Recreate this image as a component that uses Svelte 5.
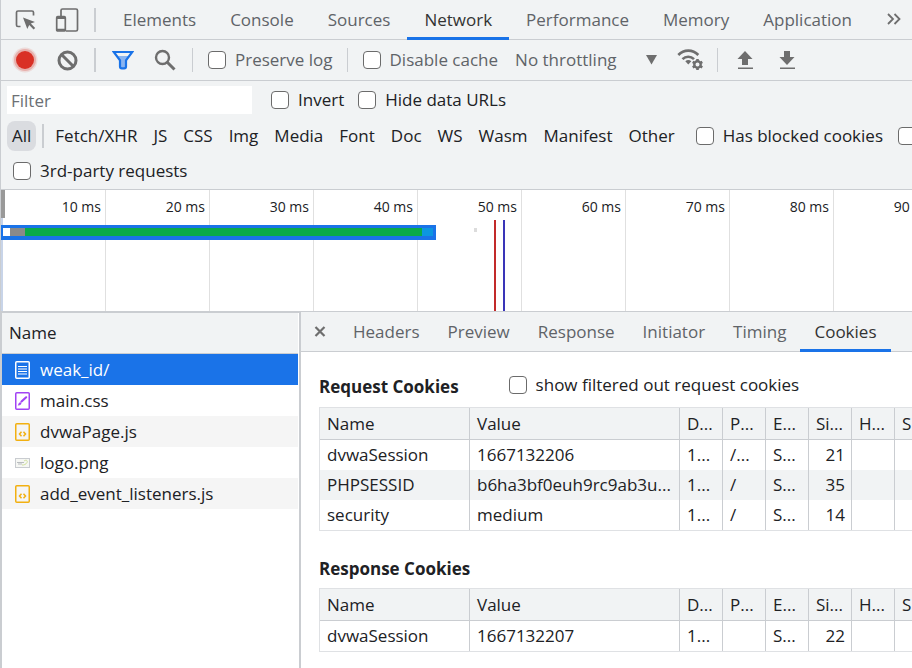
<script lang="ts">
	const panels = ['Elements', 'Console', 'Sources', 'Network', 'Performance', 'Memory', 'Application'];
	const types = ['Fetch/XHR', 'JS', 'CSS', 'Img', 'Media', 'Font', 'Doc', 'WS', 'Wasm', 'Manifest', 'Other'];
	const ticks = [10, 20, 30, 40, 50, 60, 70, 80, 90];
	const detailTabs = ['Headers', 'Preview', 'Response', 'Initiator', 'Timing', 'Cookies'];
	const columns = ['Name', 'Value', 'D...', 'P...', 'E...', 'Si...', 'H...', 'S...'];

	const requests = [
		{ name: 'weak_id/', kind: 'doc' },
		{ name: 'main.css', kind: 'css' },
		{ name: 'dvwaPage.js', kind: 'js' },
		{ name: 'logo.png', kind: 'img' },
		{ name: 'add_event_listeners.js', kind: 'js' }
	];

	const requestCookies = [
		['dvwaSession', '1667132206', '1...', '/...', 'S...', '21', '', ''],
		['PHPSESSID', 'b6ha3bf0euh9rc9ab3u...', '1...', '/', 'S...', '35', '', ''],
		['security', 'medium', '1...', '/', 'S...', '14', '', '']
	];
	const responseCookies = [['dvwaSession', '1667132207', '1...', '', 'S...', '22', '', '']];

	let activePanel = $state('Network');
	let activeType = $state('All');
	let activeTab = $state('Cookies');
	let selected = $state('weak_id/');
</script>

{#snippet fileIcon(kind: string)}
	{#if kind === 'img'}
		<svg class="file-icon" width="15" height="18" viewBox="0 0 15 18">
			<rect x="0.5" y="4.500" width="14" height="9" fill="#f6f7f4" stroke="#c9ccd0" />
			<path d="M2 8.500h7M3 10h4" stroke="#b9bcbf" />
			<path d="M9 7c2-1.500 4-.5 3 1.500s-3 2.500-5 2.500" fill="none" stroke="#cfe09a" />
		</svg>
	{:else}
		<svg class="file-icon {kind}" width="15" height="18" viewBox="0 0 15 18" fill="none" stroke="currentColor">
			<rect x="0.750" y="0.750" width="13.500" height="16.500" rx="1" stroke-width="1.500" />
			{#if kind === 'doc'}
				<path d="M3 5.500h9M3 8h9M3 10.500h9M3 13h9" stroke-width="1.200" />
			{:else if kind === 'css'}
				<path d="M6.500 9.500l4.700-4.200" stroke-width="2.200" stroke-linecap="round" />
				<path d="M3 13.200c.8-.3.600-2.700 2.200-2.700 1.600.2 1.300 2.700-2.200 2.700z" fill="currentColor" stroke-width="0.500" />
			{:else}
				<path d="M6.500 8.800l-2 2.200 2 2.200M8.500 8.800l2 2.200-2 2.200" stroke-width="1.500" />
			{/if}
		</svg>
	{/if}
{/snippet}

{#snippet cookieTable(label: string, rows: string[][])}
	<div class="table-wrap">
		<table aria-label={label}>
			<colgroup>
				<col class="col-name" />
				<col />
				<col class="col-small" />
				<col class="col-small" />
				<col class="col-small" />
				<col class="col-small" />
				<col class="col-small" />
				<col class="col-small" />
			</colgroup>
			<thead>
				<tr>
					{#each columns as column}
						<th>{column}</th>
					{/each}
				</tr>
			</thead>
			<tbody>
				{#each rows as row}
					<tr>
						{#each row as cell, i}
							<td class:number={i === 5}>{cell}</td>
						{/each}
					</tr>
				{/each}
			</tbody>
		</table>
	</div>
{/snippet}

<div class="devtools">
	<nav class="panel-bar">
		<button class="icon-button" aria-label="Inspect element">
			<svg width="22" height="24" viewBox="0 0 22 24">
				<path d="M6.500 18.500H4a1.500 1.500 0 0 1-1.500-1.500V4.500A1.500 1.500 0 0 1 4 3h14a1.500 1.500 0 0 1 1.500 1.500v3" fill="none" stroke="#6e6e6e" stroke-width="1.700" />
				<path d="M9 9.500l12 4.500-4.200 1.600 4.400 4.300-1.600 1.600-4.400-4.400L13.300 21z" fill="#6e6e6e" />
			</svg>
		</button>
		<button class="icon-button" aria-label="Toggle device toolbar">
			<svg width="24" height="26" viewBox="0 0 24 26" fill="none" stroke="#6e6e6e">
				<path d="M6 9V3.500A1.500 1.500 0 0 1 7.500 2H21a1.500 1.500 0 0 1 1.500 1.500v19A1.500 1.500 0 0 1 21 24H11" stroke-width="1.700" />
				<rect x="1.700" y="9.700" width="8.600" height="14.300" rx="1" stroke-width="1.700" />
				<path d="M1.500 11h9M1.500 22.800h9" stroke-width="2" />
			</svg>
		</button>
		<span class="divider"></span>
		<div class="panel-tabs">
			{#each panels as panel}
				<button class="tab" class:active={activePanel === panel} onclick={() => (activePanel = panel)}>{panel}</button>
			{/each}
		</div>
		<button class="more" aria-label="More tabs">
			<svg width="14" height="14" viewBox="0 0 14 14" fill="none" stroke="#6e6e6e" stroke-width="1.800">
				<path d="M1 1l5 5-5 5M7.500 1l5 5-5 5" />
			</svg>
		</button>
	</nav>

	<div class="toolbar">
		<button class="icon-button" aria-label="Stop recording">
			<svg width="26" height="26" viewBox="0 0 26 26">
				<circle cx="13" cy="13" r="12.500" fill="#d93025" opacity="0.120" />
				<circle cx="13" cy="13" r="11" fill="#d93025" opacity="0.250" />
				<circle cx="13" cy="13" r="9" fill="#d93025" />
			</svg>
		</button>
		<button class="icon-button" aria-label="Clear">
			<svg width="22" height="22" viewBox="0 0 22 22" fill="none" stroke="#6e6e6e" stroke-width="3">
				<circle cx="11.500" cy="11.500" r="8.500" />
				<path d="M5.500 5.500l12 12" />
			</svg>
		</button>
		<span class="divider"></span>
		<button class="icon-button" aria-label="Filter">
			<svg width="22" height="20" viewBox="0 0 22 20">
				<path d="M4.500 6h13l-4 5v7H8.500v-7z" fill="#8ab4f0" />
				<path d="M1.800 2h18.400L14 10.300v6.200a1.800 1.800 0 0 1-1.800 1.800H9.800A1.800 1.800 0 0 1 8 16.500v-6.200z" fill="none" stroke="#1a73e8" stroke-width="2.200" />
			</svg>
		</button>
		<button class="icon-button" aria-label="Search">
			<svg width="22" height="22" viewBox="0 0 22 22" fill="none" stroke="#6e6e6e">
				<circle cx="8.500" cy="8.500" r="6.500" stroke-width="2.400" />
				<path d="M13 13l7.500 7.500" stroke-width="3" />
			</svg>
		</button>
		<span class="divider thin"></span>
		<label class="check"><input type="checkbox" />Preserve log</label>
		<span class="divider thin wide"></span>
		<label class="check"><input type="checkbox" />Disable cache</label>
		<label class="throttling">
			<select aria-label="Throttling">
				<option>No throttling</option>
			</select>
			<svg width="11" height="10" viewBox="0 0 11 10"><path d="M0 0h11L5.500 9.500z" fill="#6e6e6e" /></svg>
		</label>
		<button class="icon-button" aria-label="Network conditions">
			<svg width="26" height="24" viewBox="0 0 26 24" fill="none" stroke="#6e6e6e">
				<path d="M1.300 7c5.500-5.800 14.500-5.800 20 0" stroke-width="2.600" />
				<path d="M5.500 11.200c3.200-3.300 8.300-3.300 11.500 0" stroke-width="2.600" />
				<path d="M8.300 13.300c1.800-1.800 4.200-1.800 6 0l-3 3.200z" fill="#6e6e6e" stroke="none" />
				<circle cx="20.500" cy="16.500" r="3.200" stroke-width="2.400" />
				<path d="M20.500 11v2M20.500 20v2M15.700 13.800l1.800 1M23.500 18.300l1.800 1M15.700 19.300l1.800-1M23.500 14.800l1.800-1" stroke-width="2.600" />
			</svg>
		</button>
		<span class="divider thin"></span>
		<button class="icon-button" aria-label="Import HAR file">
			<svg width="16" height="20" viewBox="0 0 16 20" fill="#6e6e6e"><path d="M8 1l7.500 8H11v6H5V9H.5zM1 17.500h15V19H1z" /></svg>
		</button>
		<button class="icon-button" aria-label="Export HAR file">
			<svg width="16" height="20" viewBox="0 0 16 20" fill="#6e6e6e"><path d="M8 15l7.500-8H11V1H5v6H.5zM1 17.500h15V19H1z" /></svg>
		</button>
	</div>

	<div class="filters">
		<div class="filter-row">
			<input class="filter-input" type="text" placeholder="Filter" aria-label="Filter" />
			<label class="check"><input type="checkbox" />Invert</label>
			<label class="check"><input type="checkbox" />Hide data URLs</label>
		</div>
		<div class="filter-row types">
			<button class="type all" class:active={activeType === 'All'} onclick={() => (activeType = 'All')}>All</button>
			<span class="divider"></span>
			<div class="type-list">
				{#each types as type}
					<button class="type" class:active={activeType === type} onclick={() => (activeType = type)}>{type}</button>
				{/each}
			</div>
			<label class="check"><input type="checkbox" />Has blocked cookies</label>
			<input type="checkbox" aria-label="Blocked requests" />
		</div>
		<div class="filter-row third">
			<label class="check"><input type="checkbox" />3rd-party requests</label>
		</div>
	</div>

	<div class="overview">
		<div class="ticks">
			{#each ticks as tick}
				<span class="tick">{tick} ms</span>
			{/each}
		</div>
		<span class="handle"></span>
		<span class="edge"></span>
		<div class="request-bar">
			<span class="stalled"></span>
			<span class="waiting"></span>
			<span class="download"></span>
		</div>
		<span class="blip"></span>
		<span class="marker load"></span>
		<span class="marker dom"></span>
	</div>

	<main>
		<section class="requests">
			<div class="requests-head">Name</div>
			{#each requests as request}
				<button class="request" class:selected={selected === request.name} onclick={() => (selected = request.name)}>
					{@render fileIcon(request.kind)}
					{request.name}
				</button>
			{/each}
		</section>

		<section class="details">
			<nav class="detail-bar">
				<button class="close" aria-label="Close">
					<svg width="12" height="12" viewBox="0 0 12 12"><path d="M1.500 1l9 9M10.500 1l-9 9" stroke="#6e6e6e" stroke-width="2.200" /></svg>
				</button>
				{#each detailTabs as tab}
					<button class="tab" class:active={activeTab === tab} onclick={() => (activeTab = tab)}>{tab}</button>
				{/each}
			</nav>
			<div class="cookies">
				<div class="cookies-head">
					<h2>Request Cookies</h2>
					<label class="check"><input type="checkbox" />show filtered out request cookies</label>
				</div>
				{@render cookieTable('Request Cookies', requestCookies)}
				<div class="cookies-head second">
					<h2>Response Cookies</h2>
				</div>
				{@render cookieTable('Response Cookies', responseCookies)}
			</div>
		</section>
	</main>
</div>

<style>
	:global(body) {
		margin: 0;
		background: #fff;
	}
	.devtools {
		display: flex;
		flex-direction: column;
		min-height: 100vh;
		box-sizing: border-box;
		border-left: 1px solid #cacdd1;
		overflow: hidden;
		font-family: 'Open Sans', 'Noto Sans', sans-serif;
		font-size: 17px;
		line-height: 24px;
		color: #202124;
	}
	button,
	select,
	input {
		font: inherit;
		color: inherit;
		margin: 0;
	}
	button {
		padding: 0;
		border: none;
		background: none;
		white-space: nowrap;
	}
	svg {
		display: block;
		flex: none;
	}
	input[type='checkbox'] {
		appearance: none;
		flex: none;
		width: 18px;
		height: 18px;
		box-sizing: border-box;
		border: 1px solid #6b6b6b;
		border-radius: 4px;
		background: #fff;
	}
	input[type='checkbox']:checked {
		background: #1a73e8;
	}
	.check {
		display: flex;
		align-items: center;
		gap: 9px;
		white-space: nowrap;
	}
	.divider {
		flex: none;
		width: 2px;
		height: 24px;
		margin: 0 6px;
		background: #cacdd1;
	}
	.divider.thin {
		width: 1px;
	}
	.icon-button {
		display: flex;
		flex: none;
		align-items: center;
		justify-content: center;
		width: 42px;
		height: 32px;
	}

	/* --- Panel tabs --- */
	.panel-bar {
		display: flex;
		align-items: center;
		height: 39px;
		padding-left: 3px;
		background: #f1f3f4;
		border-bottom: 1px solid #cacdd1;
		color: #5f6368;
	}
	.panel-tabs {
		display: flex;
		align-self: stretch;
		flex: none;
		margin-left: 4px;
	}
	.tab {
		height: 40px;
		box-sizing: border-box;
		padding: 0 17px;
		border-top: 3px solid transparent;
		border-bottom: 3px solid transparent;
		color: #5f6368;
	}
	.tab.active {
		color: #333;
		border-bottom-color: #1a73e8;
	}
	.more {
		margin: 0 11px 0 auto;
	}

	/* --- Network toolbar --- */
	.toolbar {
		display: flex;
		align-items: center;
		height: 40px;
		padding-left: 3px;
		background: #f1f3f4;
		border-bottom: 1px solid #cacdd1;
		color: #5f6368;
	}
	.toolbar .check {
		margin-left: 9px;
	}
	.divider.wide {
		margin-left: 14px;
	}
	.throttling {
		display: flex;
		align-items: center;
		flex: none;
		width: 142px;
		margin: 0 12px 0 17px;
	}
	select {
		appearance: none;
		flex: 1;
		padding: 0;
		border: none;
		background: none;
	}

	/* --- Filters --- */
	.filters {
		display: flex;
		flex-direction: column;
		padding: 4px 0 3px 6px;
		background: #f1f3f4;
		border-bottom: 1px solid #cacdd1;
	}
	.filter-row {
		display: flex;
		align-items: center;
		height: 30px;
		gap: 14px;
	}
	.filter-input {
		width: 245px;
		height: 28px;
		box-sizing: border-box;
		margin-right: 5px;
		padding: 4px;
		border: none;
		background: #fff;
	}
	.filter-input::placeholder {
		color: #6c7075;
		opacity: 1;
	}
	.types {
		height: 41px;
		gap: 0;
	}
	.type-list {
		display: flex;
		gap: 16px;
		margin: 0 21px 0 5px;
	}
	.type.all {
		padding: 3px 5px;
		border-radius: 8px;
	}
	.type.active {
		background: #dadce0;
	}
	.types > .check {
		margin-right: 15px;
	}
	.third {
		padding-left: 6px;
	}

	/* --- Timeline overview --- */
	.overview {
		position: relative;
		height: 121px;
		overflow: hidden;
		border-bottom: 1px solid #cacdd1;
	}
	.ticks {
		display: flex;
		height: 100%;
		padding-left: 1px;
	}
	.tick {
		flex: none;
		width: 104px;
		box-sizing: border-box;
		padding: 5px 4px 0 0;
		border-right: 1px solid #e0e0e0;
		font-size: 14px;
		text-align: right;
	}
	.handle,
	.edge,
	.request-bar,
	.blip,
	.marker {
		position: absolute;
	}
	.handle {
		left: 0;
		top: 0;
		width: 4px;
		height: 28px;
		background: #999;
	}
	.edge {
		left: 0;
		top: 28px;
		width: 2px;
		bottom: 0;
		background: #c8d4e8;
	}
	.request-bar {
		display: flex;
		left: 0;
		top: 35px;
		width: 435px;
		height: 15px;
		box-sizing: border-box;
		padding: 3px 3px 4px 2px;
		background: #1a73e8;
	}
	.stalled {
		width: 15px;
		border-left: 7px solid #fff;
		background: #8a8a8a;
	}
	.waiting {
		flex: 1;
		background: #0aaa49;
	}
	.download {
		width: 11px;
		background: #0d96e0;
	}
	.blip {
		left: 473px;
		top: 38px;
		width: 3px;
		height: 4px;
		background: #dcdcdc;
	}
	.marker {
		top: 30px;
		bottom: 0;
		width: 2px;
	}
	.load {
		left: 493px;
		background: #c22a2a;
	}
	.dom {
		left: 502px;
		background: #3a35b8;
	}

	/* --- Request list --- */
	main {
		display: flex;
		flex: 1;
	}
	.requests {
		flex: none;
		width: 300px;
		box-sizing: border-box;
		padding-right: 1px;
		border: solid #cacdd1;
		border-width: 1px 2px 0 1px;
	}
	.requests-head {
		height: 41px;
		box-sizing: border-box;
		padding: 8px 7px;
		background: #f1f3f4;
		border-bottom: 1px solid #cacdd1;
	}
	.request {
		display: flex;
		align-items: center;
		gap: 10px;
		width: 100%;
		height: 31px;
		padding-left: 13px;
		text-align: left;
	}
	.request:nth-child(4),
	.request:nth-child(6) {
		background: #f5f5f5;
	}
	.request.selected {
		background: #1a73e8;
		color: #fff;
	}
	.file-icon.css {
		color: #a142f4;
	}
	.file-icon.js {
		color: #f2b011;
	}

	/* --- Cookies --- */
	.details {
		flex: 1;
		min-width: 0;
	}
	.detail-bar {
		display: flex;
		height: 39px;
		background: #f1f3f4;
		border-bottom: 1px solid #cacdd1;
	}
	.detail-bar .tab {
		padding: 0 14px;
	}
	.close {
		display: flex;
		align-items: center;
		justify-content: center;
		width: 38px;
	}
	.cookies {
		padding-left: 18px;
	}
	.cookies-head {
		display: flex;
		align-items: center;
		gap: 50px;
		height: 24px;
		padding: 21px 0 10px;
	}
	.cookies-head.second {
		padding: 24px 0 9px;
	}
	h2 {
		margin: 4px 0 0;
		font-size: 17px;
		line-height: 24px;
		font-weight: 700;
	}
	.table-wrap {
		overflow: hidden;
	}
	table {
		width: 100%;
		min-width: 620px;
		table-layout: fixed;
		border-collapse: separate;
		border-spacing: 0;
		border: 1px solid #dfe1e4;
	}
	.col-name {
		width: 150px;
	}
	.col-small {
		width: 43px;
	}
	th,
	td {
		height: 30px;
		box-sizing: border-box;
		padding: 0 6px 0 7px;
		border-right: 1px solid #cacdd1;
		font-weight: 400;
		text-align: left;
		white-space: nowrap;
		overflow: hidden;
	}
	th {
		height: 32px;
		background: #f1f3f4;
		border-bottom: 1px solid #cacdd1;
	}
	tbody tr:nth-child(even) {
		background: #f1f3f4;
	}
	.number {
		text-align: right;
	}
</style>
